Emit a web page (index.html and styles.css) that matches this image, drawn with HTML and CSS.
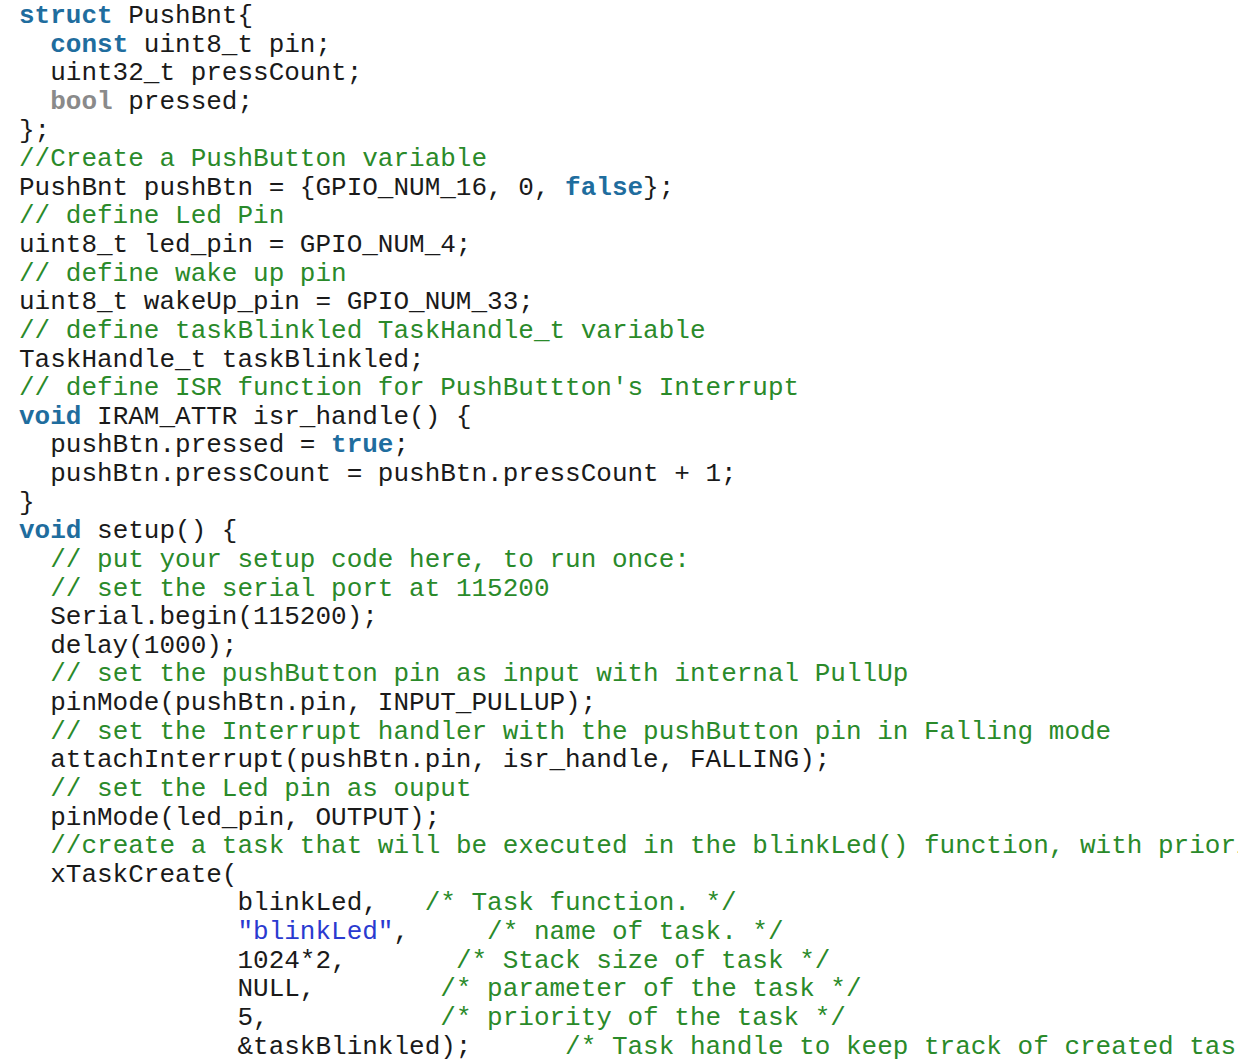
FILE: index.html
```html
<!DOCTYPE html>
<html>
<head>
<meta charset="utf-8">
<link rel="stylesheet" href="styles.css">
</head>
<body>
<pre class="code"><span class="kw">struct</span> PushBnt{
  <span class="kw">const</span> uint8_t pin;
  uint32_t pressCount;
  <span class="ty">bool</span> pressed;
};
<span class="cm">//Create a PushButton variable</span>
PushBnt pushBtn = {GPIO_NUM_16, 0, <span class="kw">false</span>};
<span class="cm">// define Led Pin</span>
uint8_t led_pin = GPIO_NUM_4;
<span class="cm">// define wake up pin</span>
uint8_t wakeUp_pin = GPIO_NUM_33;
<span class="cm">// define taskBlinkled TaskHandle_t variable</span>
TaskHandle_t taskBlinkled;
<span class="cm">// define ISR function for PushButtton's Interrupt</span>
<span class="kw">void</span> IRAM_ATTR isr_handle() {
  pushBtn.pressed = <span class="kw">true</span>;
  pushBtn.pressCount = pushBtn.pressCount + 1;
}
<span class="kw">void</span> setup() {
  <span class="cm">// put your setup code here, to run once:</span>
  <span class="cm">// set the serial port at 115200</span>
  Serial.begin(115200);
  delay(1000);
  <span class="cm">// set the pushButton pin as input with internal PullUp</span>
  pinMode(pushBtn.pin, INPUT_PULLUP);
  <span class="cm">// set the Interrupt handler with the pushButton pin in Falling mode</span>
  attachInterrupt(pushBtn.pin, isr_handle, FALLING);
  <span class="cm">// set the Led pin as ouput</span>
  pinMode(led_pin, OUTPUT);
  <span class="cm">//create a task that will be executed in the blinkLed() function, with priority 1 and executed on core 0</span>
  xTaskCreate(
              blinkLed,   <span class="cm">/* Task function. */</span>
              <span class="st">"blinkLed"</span>,     <span class="cm">/* name of task. */</span>
              1024*2,       <span class="cm">/* Stack size of task */</span>
              NULL,        <span class="cm">/* parameter of the task */</span>
              5,           <span class="cm">/* priority of the task */</span>
              &amp;taskBlinkled);      <span class="cm">/* Task handle to keep track of created task */</span>
</pre>
</body>
</html>
```

FILE: styles.css
```css
html, body {
  margin: 0;
  padding: 0;
  background: #ffffff;
  overflow: hidden;
}

body {
  width: 1238px;
  height: 1062px;
}

.code {
  margin: 0;
  padding: 2px 0 0 19px;
  font-family: "Courier New", "Liberation Mono", monospace;
  font-size: 26px;
  line-height: 28.62px;
  color: #1a1a1a;
  white-space: pre;
}

.kw {
  color: #1f6d9e;
  font-weight: bold;
}

.ty {
  color: #8a8a8a;
  font-weight: bold;
}

.cm {
  color: #2a8a2a;
}

.st {
  color: #2a3ad0;
}
```
